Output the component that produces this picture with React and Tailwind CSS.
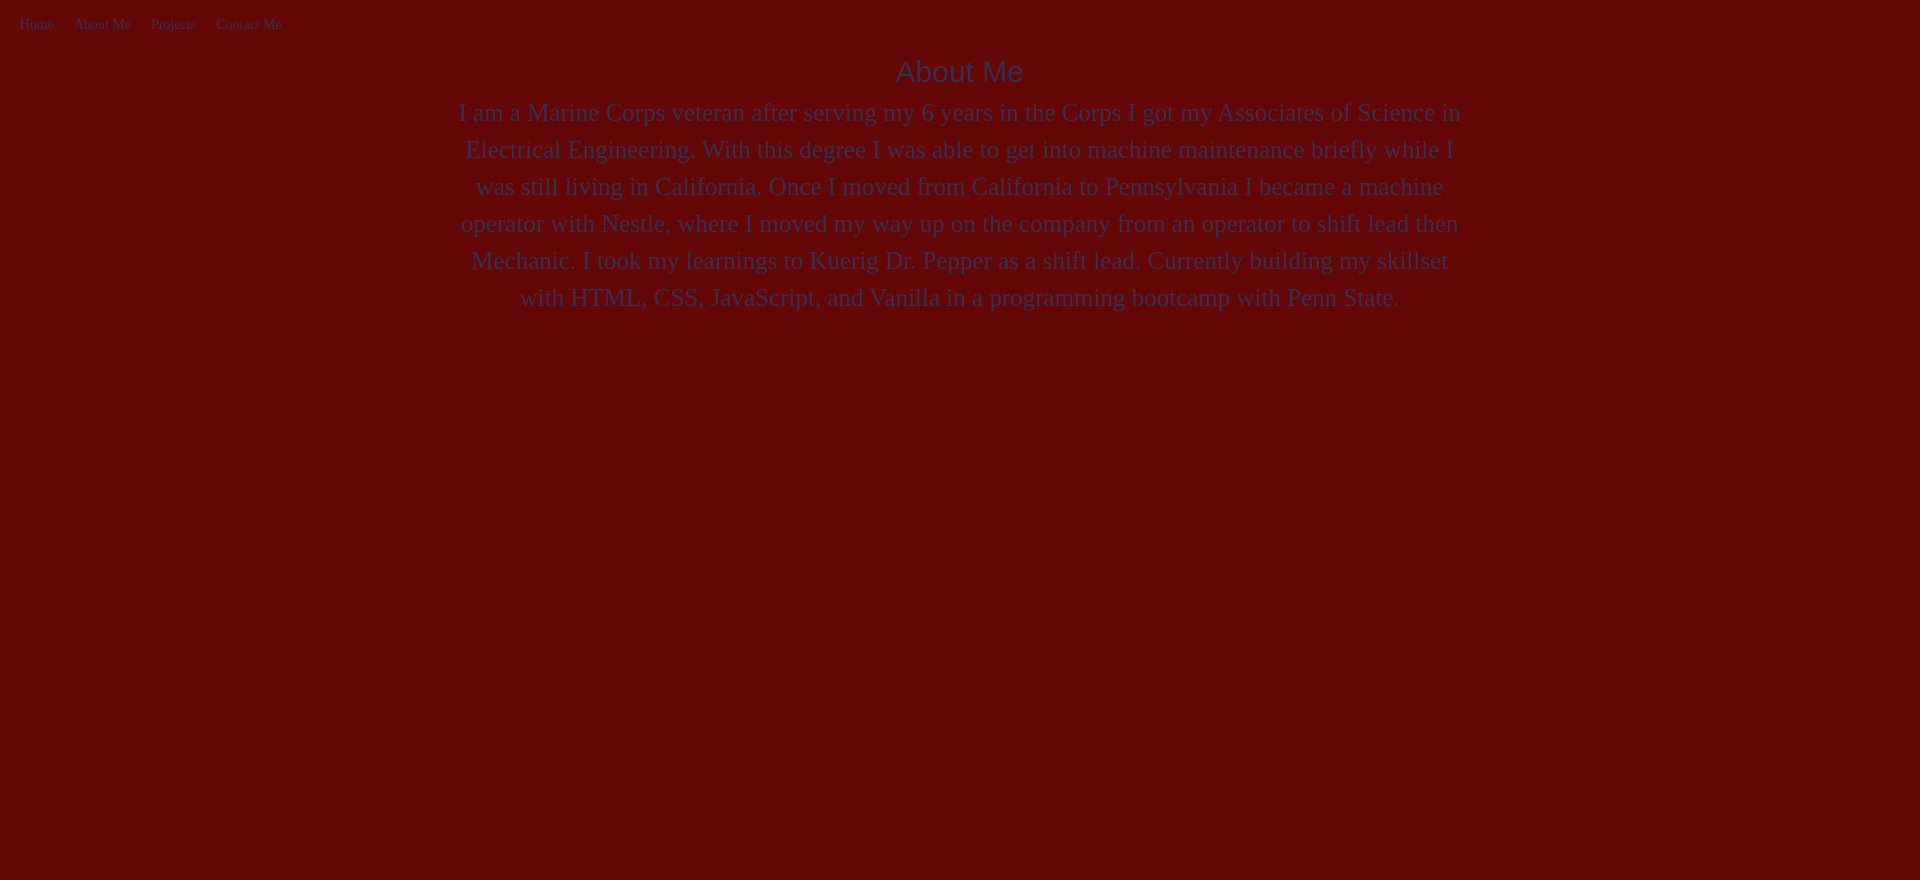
import React from 'react';

const links = ['Home', 'About Me', 'Projects', 'Contact Me'];

const App = () => {
  return (
    <div className="min-h-[880px] w-full bg-[#630707] text-[#3a2c4c]">
      {/* Nav */}
      <nav className="flex px-[10px] pt-[17px]" style={{ fontFamily: '"Liberation Serif", serif' }}>
        {links.map((link) => (
          <a key={link} href="#" className="px-[10px] text-[14px] leading-[16px]">
            {link}
          </a>
        ))}
      </nav>

      <main className="mx-auto mt-[22px] flex w-[1016px] flex-col items-center text-center">
        <h1 className="text-[30px] leading-[34px]" style={{ fontFamily: '"Liberation Sans", sans-serif' }}>
          About Me
        </h1>
        <p className="mt-[5px] text-[25px] leading-[37px]" style={{ fontFamily: '"Liberation Serif", serif' }}>
          I am a Marine Corps veteran after serving my 6 years in the Corps I got my Associates of Science in
          Electrical Engineering. With this degree I was able to get into machine maintenance briefly while I was
          still living in California. Once I moved from California to Pennsylvania I became a machine operator with
          Nestle, where I moved my way up on the company from an operator to shift lead then Mechanic. I took my
          learnings to Kuerig Dr. Pepper as a shift lead. Currently building my skillset with HTML, CSS, JavaScript,
          and Vanilla in a programming bootcamp with Penn State.
        </p>
      </main>
    </div>
  );
};

export default App;
